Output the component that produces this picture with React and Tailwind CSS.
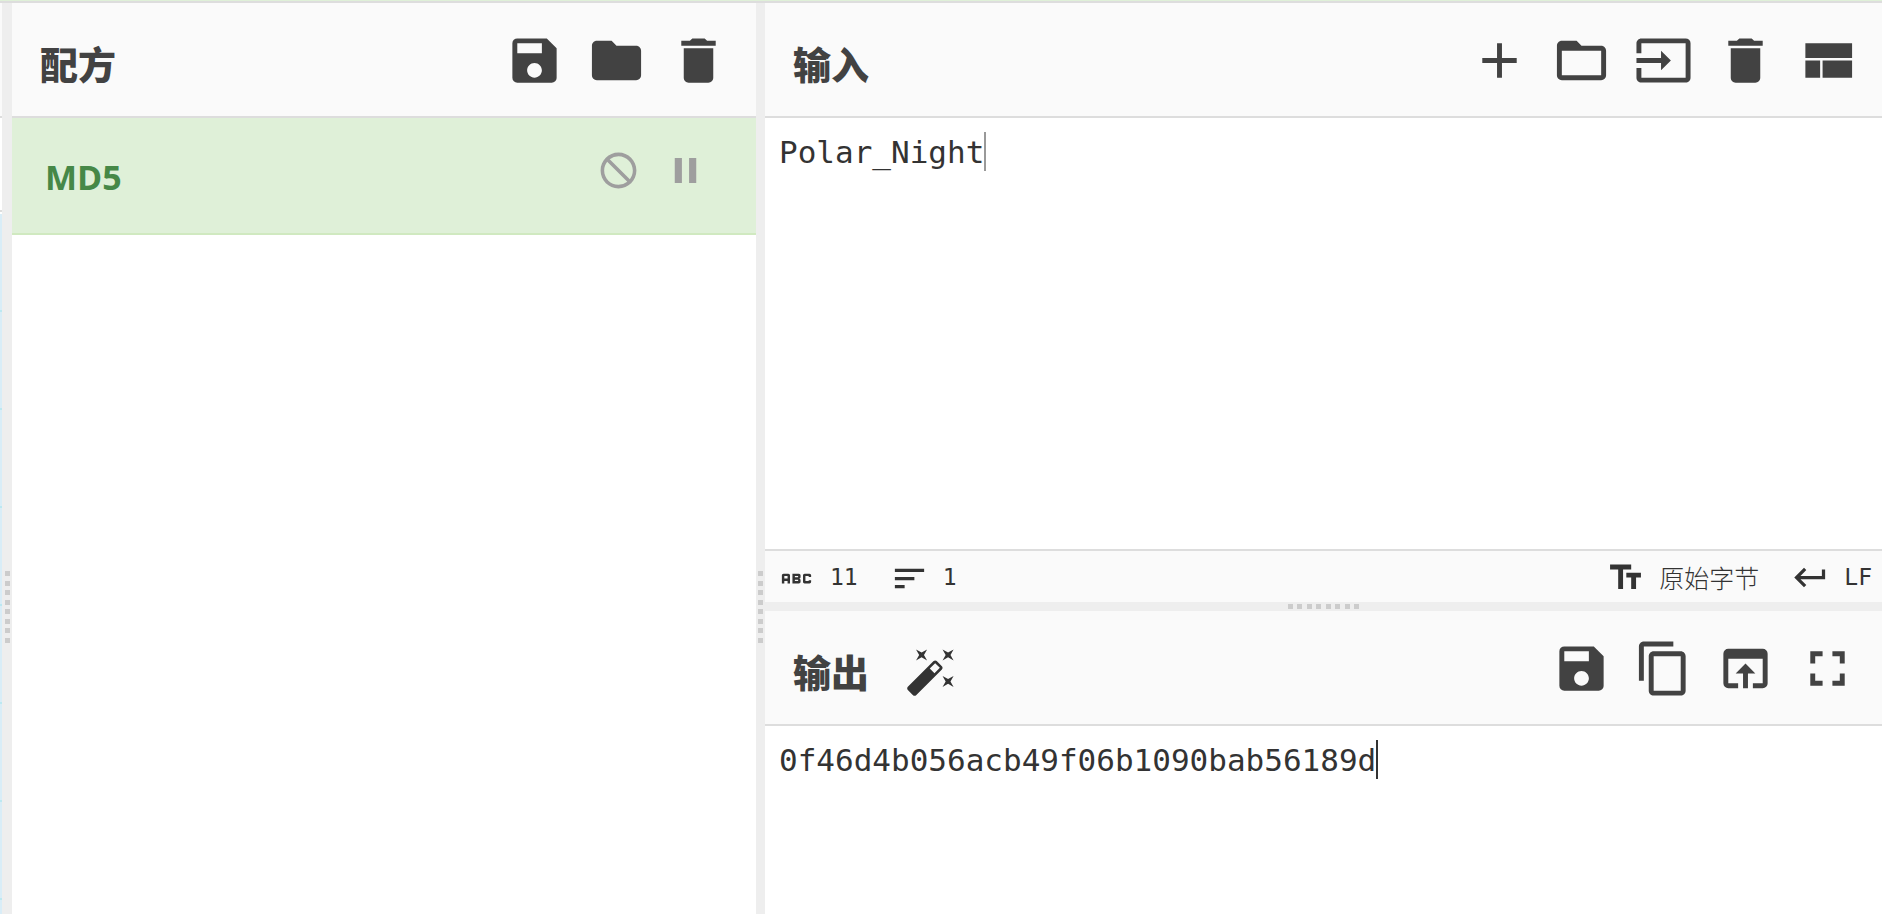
import {
  MdAbc,
  MdAdd,
  MdContentCopy,
  MdDelete,
  MdFolder,
  MdFolderOpen,
  MdFullscreen,
  MdInput,
  MdKeyboardReturn,
  MdNotInterested,
  MdOpenInBrowser,
  MdPause,
  MdSave,
  MdSort,
  MdTextFields,
} from 'react-icons/md';

const RECIPE = [{ name: 'MD5' }];

const OPERATION_ROWS = [0, 1, 2, 3, 4, 5, 6, 7];

function LayoutIcon({ className }) {
  return (
    <svg viewBox="0 0 24 24" fill="currentColor" className={className}>
      <path d="M3 19h6v-7H3v7zm7 0h12v-7H10v7zM3 5v6h19V5H3z" />
    </svg>
  );
}

function IconButton({ icon: Icon, label }) {
  return (
    <button type="button" aria-label={label} title={label} className="text-[#424242]">
      <Icon className="size-[59px]" />
    </button>
  );
}

function PanelHeader({ title, extra, className, children }) {
  return (
    <header
      className={`flex h-[115px] shrink-0 items-center border-b-2 border-[#ddd] bg-[#fafafa] ${className}`}
    >
      <h2 className="pt-2 text-[38px] leading-[58px] font-black text-[#424242]">{title}</h2>
      {extra}
      <div className="ml-auto flex items-center gap-[23px] pt-px">{children}</div>
    </header>
  );
}

function GripDots({ vertical }) {
  return (
    <div className={vertical ? 'flex h-[72px] flex-col justify-between' : 'flex w-[72px] justify-between'}>
      {[0, 1, 2, 3, 4, 5, 6, 7].map((i) => (
        <span key={i} className="size-[5px] bg-[#ccc]" />
      ))}
    </div>
  );
}

function VerticalGutter() {
  return (
    <div className="flex cursor-col-resize justify-center bg-[#eee] pt-[568px]">
      <GripDots vertical />
    </div>
  );
}

function MagicWand() {
  return (
    <button type="button" aria-label="Magic" className="ml-9 pt-2 text-[#333]">
      <svg viewBox="0 0 24 24" fill="currentColor" className="size-[53px]">
        <path d="M7.5,5.6L5,7L6.4,4.5L5,2L7.5,3.4L10,2L8.6,4.5L10,7L7.5,5.6M19.5,15.4L22,14L20.6,16.5L22,19L19.5,17.6L17,19L18.4,16.5L17,14L19.5,15.4M22,2L20.6,4.5L22,7L19.5,5.6L17,7L18.4,4.5L17,2L19.5,3.4L22,2M13.34,12.78L15.78,10.34L13.66,8.22L11.22,10.66L13.34,12.78M14.37,7.29L16.71,9.63C17.1,10 17.1,10.65 16.71,11.04L5.04,22.71C4.65,23.1 4,23.1 3.63,22.71L1.29,20.37C0.9,20 0.9,19.35 1.29,18.96L12.96,7.29C13.35,6.9 14,6.9 14.37,7.29Z" />
      </svg>
    </button>
  );
}

// The visible edge of the operations list
function OperationsEdge() {
  return (
    <div className="flex flex-col overflow-hidden bg-white">
      <div className="h-[115px] shrink-0 border-b-2 border-[#ddd] bg-[#fafafa]" />
      <div className="mb-[2px] h-[94px] shrink-0 border-b-2 border-[#ddd]" />
      {OPERATION_ROWS.map((row) => (
        <div key={row} className="h-[98px] shrink-0 border-b-2 border-[#bce8f1] bg-[#d9edf7]" />
      ))}
    </div>
  );
}

function RecipePanel() {
  return (
    <section className="flex min-w-0 flex-col bg-white">
      <PanelHeader title="配方" className="pr-7 pl-7">
        <IconButton icon={MdSave} label="保存配方" />
        <IconButton icon={MdFolder} label="加载配方" />
        <IconButton icon={MdDelete} label="清空配方" />
      </PanelHeader>
      <ul>
        {RECIPE.map((op) => (
          <li
            key={op.name}
            className="flex h-[117px] items-center border-b-2 border-[#d0e9c0] bg-[#dff0d8] pr-[49px] pl-[33px]"
          >
            <span className="pt-[2px] text-[34px] leading-[46px] font-bold text-[#468847]">{op.name}</span>
            <div className="ml-auto flex gap-6 pb-[10px] text-[#9e9e9e]">
              <button type="button" aria-label="禁用">
                <MdNotInterested className="size-[43px]" />
              </button>
              <button type="button" aria-label="断点">
                <MdPause className="size-[43px]" />
              </button>
            </div>
          </li>
        ))}
      </ul>
    </section>
  );
}

function InputPanel() {
  return (
    <section className="flex min-h-0 flex-[599] flex-col bg-white">
      <PanelHeader title="输入" className="pr-[25px] pl-7">
        <IconButton icon={MdAdd} label="新建标签页" />
        <IconButton icon={MdFolderOpen} label="打开文件夹" />
        <IconButton icon={MdInput} label="打开文件" />
        <IconButton icon={MdDelete} label="清空输入" />
        <IconButton icon={LayoutIcon} label="重置布局" />
      </PanelHeader>
      <div className="relative flex-1 font-['DejaVu_Sans_Mono',monospace] text-[31px] leading-[39px] text-[#333]">
        <textarea
          aria-label="输入"
          defaultValue="Polar_Night"
          spellCheck={false}
          className="block size-full resize-none pt-[15px] pl-[14px] outline-none"
        />
        <span className="absolute top-[14px] left-[calc(14px+11ch)] h-[39px] w-[2px] bg-[#999]" />
      </div>
      <footer className="flex h-[53px] shrink-0 items-center border-t-2 border-[#ddd] bg-[#fafafa] pr-[10px] pl-3 font-['DejaVu_Sans_Mono','Noto_Sans_CJK_SC',monospace] text-[23px] leading-8 text-[#333]">
        <MdAbc className="mt-1 size-[39px]" />
        <span className="ml-[14px]">11</span>
        <MdSort className="mt-1 ml-8 size-[39px]" />
        <span className="ml-[14px]">1</span>
        <button type="button" className="ml-auto flex items-center">
          <MdTextFields className="mt-[2px] size-[39px]" />
          <span className="ml-[14px] font-['Noto_Sans_CJK_SC',sans-serif] text-[25px] font-light">原始字节</span>
        </button>
        <button type="button" className="ml-8 flex items-center">
          <MdKeyboardReturn className="mt-[2px] size-[39px]" />
          <span className="ml-[14px]">LF</span>
        </button>
      </footer>
    </section>
  );
}

function OutputPanel() {
  return (
    <section className="flex min-h-0 flex-[303] flex-col bg-white">
      <PanelHeader title="输出" extra={<MagicWand />} className="pr-[25px] pl-7">
        <IconButton icon={MdSave} label="保存输出" />
        <IconButton icon={MdContentCopy} label="复制输出" />
        <IconButton icon={MdOpenInBrowser} label="替换输入" />
        <IconButton icon={MdFullscreen} label="最大化" />
      </PanelHeader>
      <div className="relative flex-1 font-['DejaVu_Sans_Mono',monospace] text-[31px] leading-[39px] text-[#333]">
        <textarea
          aria-label="输出"
          readOnly
          value="0f46d4b056acb49f06b1090bab56189d"
          className="block size-full resize-none pt-[15px] pl-[14px] outline-none"
        />
        <span className="absolute top-[14px] left-[calc(14px+32ch)] h-[39px] w-[2px] bg-[#333]" />
      </div>
    </section>
  );
}

export default function App() {
  return (
    <div className="flex h-screen flex-col overflow-hidden font-['Open_Sans','Noto_Sans_CJK_SC',sans-serif]">
      <div className="h-[3px] shrink-0 border-b-2 border-[#ddd] bg-[#dff0d8]" />
      <main className="grid min-h-0 flex-1 grid-cols-[2px_10px_744fr_9px_1117fr]">
        <OperationsEdge />
        <VerticalGutter />
        <RecipePanel />
        <VerticalGutter />
        <div className="flex min-h-0 min-w-0 flex-col">
          <InputPanel />
          <div className="flex h-[9px] shrink-0 cursor-row-resize items-center justify-center bg-[#eee]">
            <GripDots />
          </div>
          <OutputPanel />
        </div>
      </main>
    </div>
  );
}
